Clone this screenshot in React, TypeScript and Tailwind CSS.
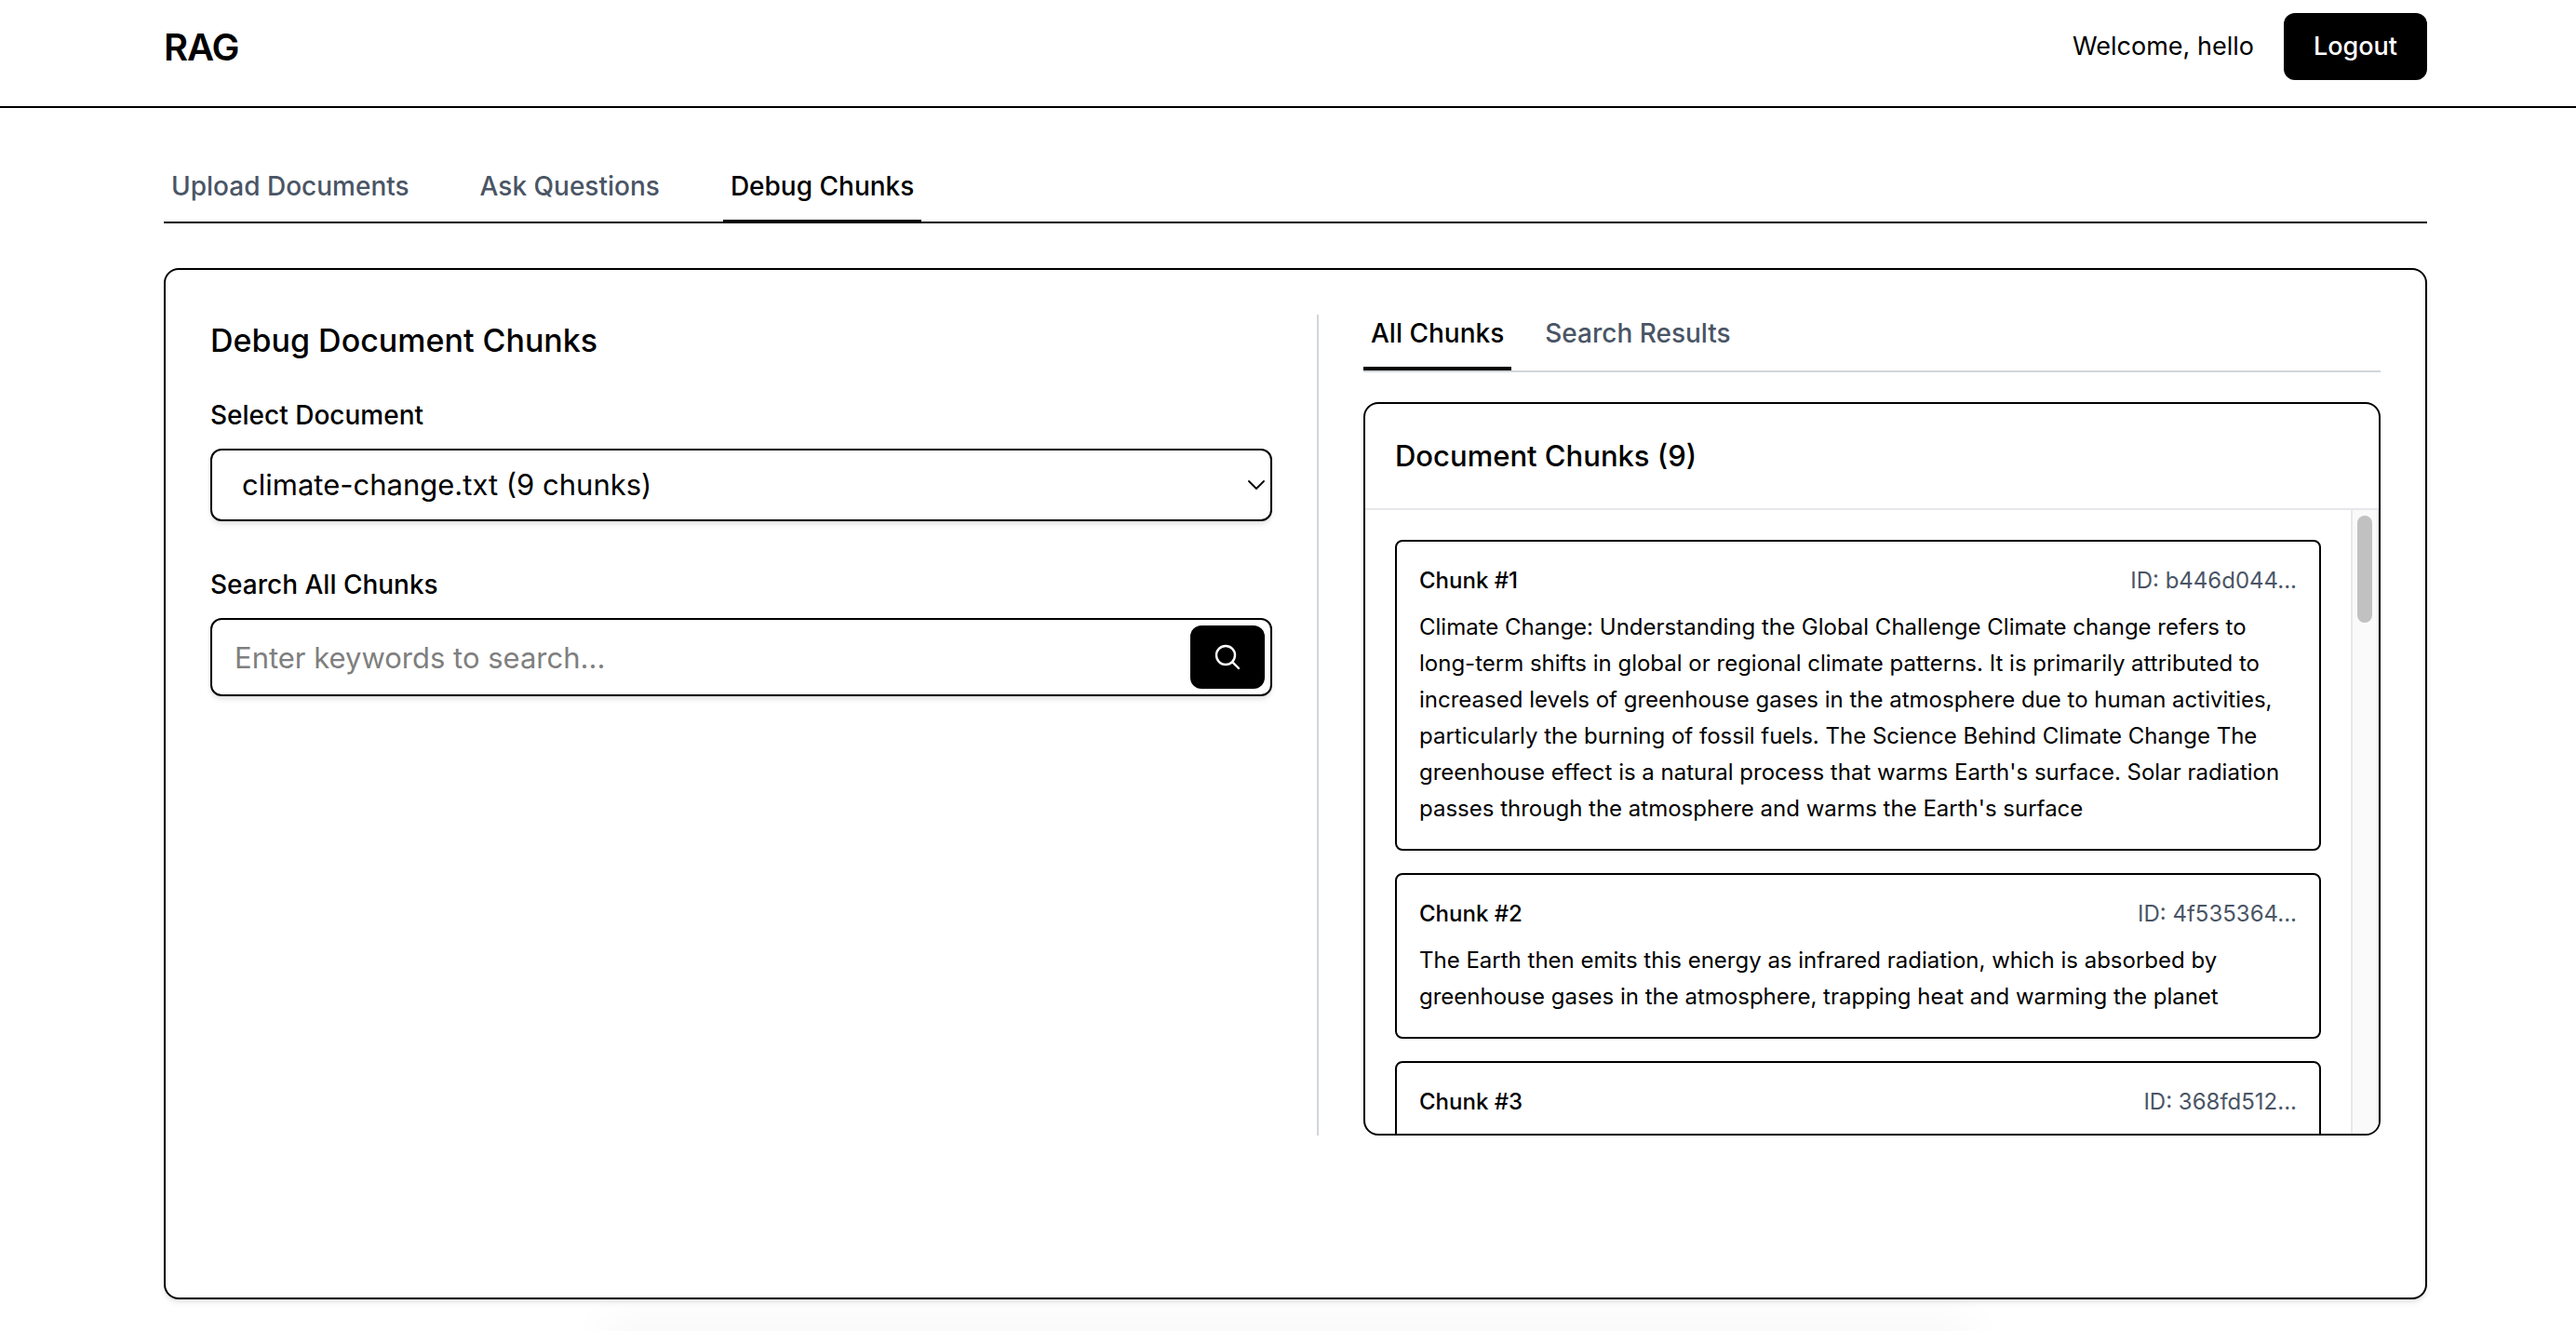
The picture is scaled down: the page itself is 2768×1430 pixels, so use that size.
import { useState } from "react";

type Chunk = { number: number; id: string; text?: string };

const chunks: Chunk[] = [
  {
    number: 1,
    id: "b446d044...",
    text: "Climate Change: Understanding the Global Challenge Climate change refers to long-term shifts in global or regional climate patterns. It is primarily attributed to increased levels of greenhouse gases in the atmosphere due to human activities, particularly the burning of fossil fuels. The Science Behind Climate Change The greenhouse effect is a natural process that warms Earth's surface. Solar radiation passes through the atmosphere and warms the Earth's surface",
  },
  {
    number: 2,
    id: "4f535364...",
    text: "The Earth then emits this energy as infrared radiation, which is absorbed by greenhouse gases in the atmosphere, trapping heat and warming the planet",
  },
  { number: 3, id: "368fd512..." },
];

const pages = ["Upload Documents", "Ask Questions", "Debug Chunks"];
const views = ["All Chunks", "Search Results"];

function Header() {
  return (
    <header className="shrink-0 border-b-2 border-black">
      <div className="flex items-center justify-between pt-[14px] pr-40 pb-7 pl-44">
        <h1 className="pt-[2px] text-[40px] leading-[56px] font-semibold tracking-tight">RAG</h1>
        <div className="flex items-center gap-8">
          <span className="text-[27px] leading-10">Welcome, hello</span>
          <button
            type="button"
            className="rounded-xl bg-black px-8 py-4 text-[27px] leading-10 font-medium text-white"
          >
            Logout
          </button>
        </div>
      </div>
    </header>
  );
}

function ChunkCard({ chunk }: { chunk: Chunk }) {
  return (
    <article className="shrink-0 rounded-lg border-2 border-black p-6">
      <div className="mb-3 flex items-center justify-between text-[24px] leading-9">
        <h4 className="font-medium">Chunk #{chunk.number}</h4>
        <span className="text-gray-600">ID: {chunk.id}</span>
      </div>
      <p className="min-h-10 text-[24px] leading-[39px]">{chunk.text}</p>
    </article>
  );
}

function SearchPanel() {
  return (
    <section className="flex min-w-0 flex-col">
      <h2 className="text-[34px] leading-[56px] font-medium">Debug Document Chunks</h2>
      <label htmlFor="document" className="mt-8 text-[28px] leading-10 font-medium">
        Select Document
      </label>
      <div className="relative mt-4">
        <select
          id="document"
          className="h-[78px] w-full appearance-none rounded-xl border-2 border-black bg-white px-8 text-[31px] shadow-md"
        >
          <option>climate-change.txt (9 chunks)</option>
        </select>
        <svg
          aria-hidden="true"
          viewBox="0 0 18 10"
          className="pointer-events-none absolute top-[34px] right-2 h-[10px] w-[18px]"
          fill="none"
          stroke="black"
          strokeWidth="1.8"
          strokeLinecap="round"
          strokeLinejoin="round"
        >
          <path d="M1 1l8 8 8-8" />
        </svg>
      </div>
      <label htmlFor="keywords" className="mt-12 text-[28px] leading-10 font-medium">
        Search All Chunks
      </label>
      <form
        className="mt-4 flex h-[84px] items-center rounded-xl border-2 border-black pr-[6px] shadow-md"
        onSubmit={(e) => e.preventDefault()}
      >
        <input
          id="keywords"
          type="text"
          placeholder="Enter keywords to search..."
          className="h-full min-w-0 flex-1 rounded-xl bg-transparent px-6 text-[31px] outline-none placeholder:text-[#7f7f7f]"
        />
        <button
          type="submit"
          aria-label="Search"
          className="flex h-[68px] w-20 items-center justify-center rounded-xl bg-black text-white"
        >
          <svg
            aria-hidden="true"
            viewBox="0 0 24 24"
            className="size-8"
            fill="none"
            stroke="currentColor"
            strokeWidth="1.8"
            strokeLinecap="round"
            strokeLinejoin="round"
          >
            <path d="m21 21-5.197-5.197m0 0A7.5 7.5 0 1 0 5.196 5.196a7.5 7.5 0 0 0 10.607 10.607Z" />
          </svg>
        </button>
      </form>
    </section>
  );
}

function ResultsPanel() {
  const [view, setView] = useState(views[0]);
  return (
    <section className="flex min-h-0 min-w-0 flex-col border-l-2 border-gray-300 pl-12">
      <nav className="flex gap-7 border-b-2 border-gray-300">
        {views.map((name) => (
          <button
            key={name}
            type="button"
            onClick={() => setView(name)}
            className={
              name === view
                ? "border-b-4 border-black px-2 pb-4 text-[28px] leading-10 font-medium text-black"
                : "border-b-4 border-transparent px-2 pb-4 text-[28px] leading-10 font-medium text-gray-600"
            }
          >
            {name}
          </button>
        ))}
      </nav>
      <div className="mt-8 flex min-h-0 flex-1 flex-col overflow-hidden rounded-2xl border-2 border-black">
        <h3 className="border-b-2 border-gray-200 px-8 py-8 text-[31px] leading-[48px] font-medium">
          Document Chunks (9)
        </h3>
        <div className="flex min-h-0 flex-1">
          <div className="flex min-w-0 flex-1 flex-col gap-6 overflow-y-auto p-8 [scrollbar-width:none]">
            {chunks.map((chunk) => (
              <ChunkCard key={chunk.number} chunk={chunk} />
            ))}
          </div>
          <div
            aria-hidden="true"
            className="w-[30px] shrink-0 border-x-2 border-[#e8e8e8] bg-[#fafafa] px-[5px] pt-[6px]"
          >
            <div className="h-[115px] rounded-full bg-[#c1c1c1]" />
          </div>
        </div>
      </div>
    </section>
  );
}

export default function App() {
  const [page, setPage] = useState(pages[2]);
  return (
    <div className="flex h-screen flex-col overflow-hidden bg-white font-[Inter,sans-serif] text-black">
      <Header />
      <main className="flex min-h-0 flex-1 flex-col pr-40 pl-44">
        <nav className="mt-12 flex gap-[60px] border-b-2 border-black">
          {pages.map((name) => (
            <button
              key={name}
              type="button"
              onClick={() => setPage(name)}
              className={
                name === page
                  ? "border-b-2 border-black px-2 pt-4 pb-4 text-[28px] leading-10 font-medium text-black"
                  : "border-b-2 border-transparent px-2 pt-4 pb-4 text-[28px] leading-10 font-medium text-gray-600"
              }
            >
              {name}
            </button>
          ))}
        </nav>
        <div className="mt-12 mb-[34px] grid min-h-0 flex-1 grid-cols-[1141fr_1143fr] grid-rows-1 gap-12 rounded-2xl border-2 border-black px-12 pt-12 pb-[174px] shadow-md">
          <SearchPanel />
          <ResultsPanel />
        </div>
      </main>
      <div aria-hidden="true" className="mx-auto -mb-5 h-5 w-[53%] shrink-0 shadow-[0_0_50px_rgba(0,0,0,0.08)]" />
    </div>
  );
}
